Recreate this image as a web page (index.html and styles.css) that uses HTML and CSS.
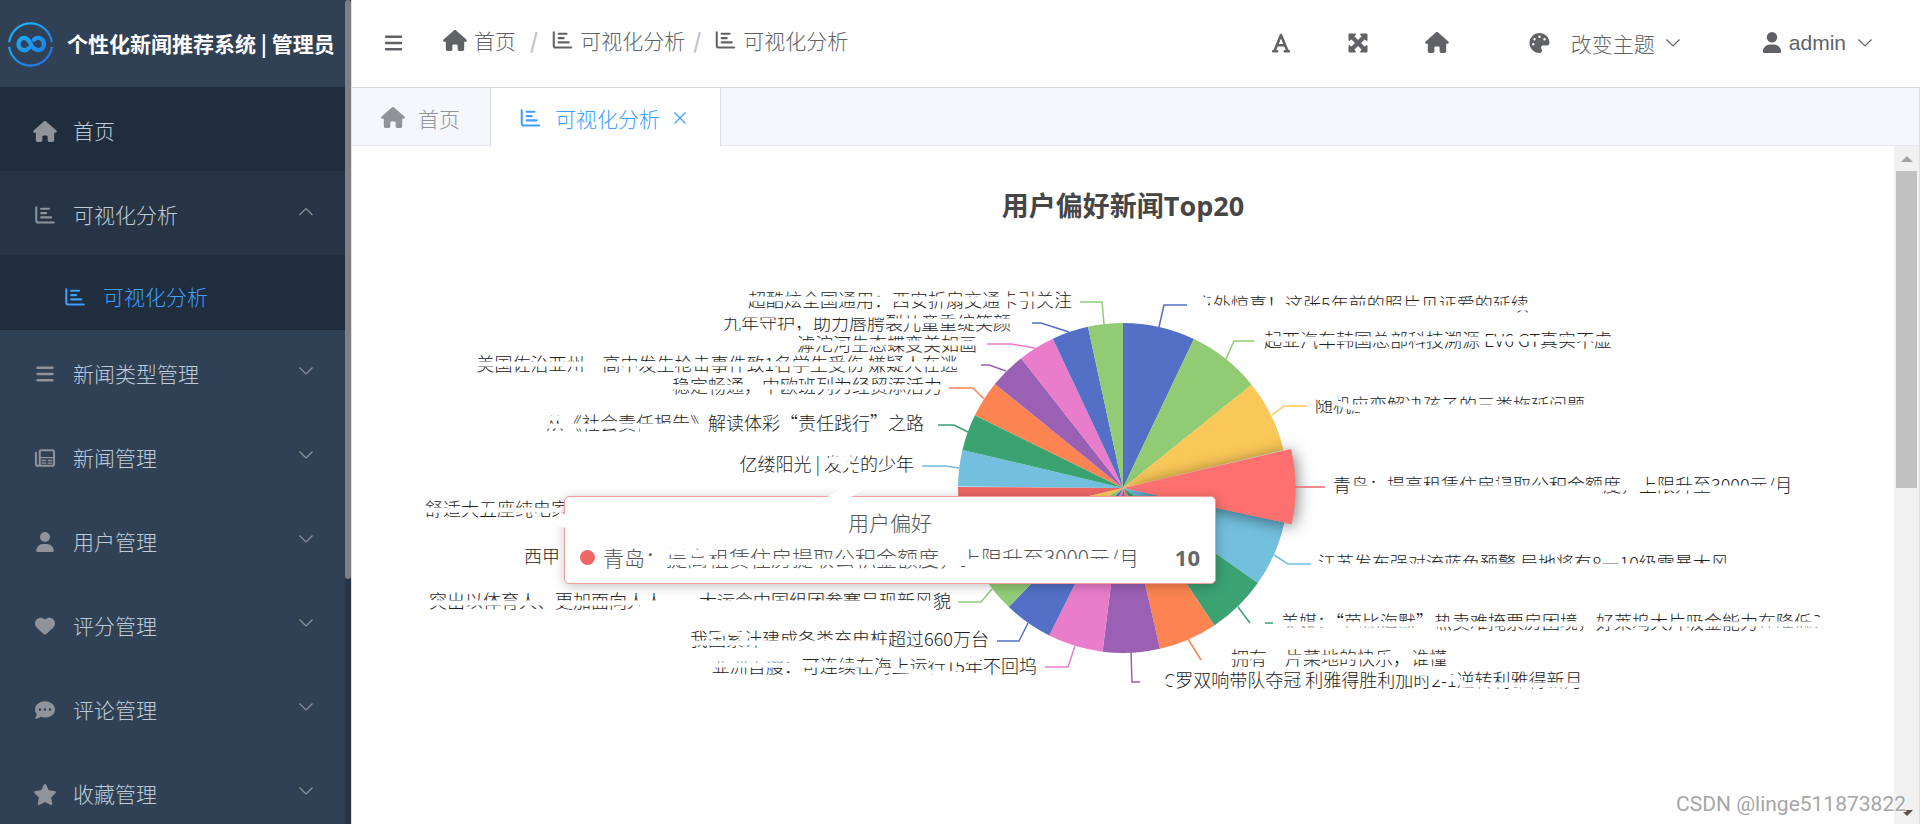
FILE: index.html
```html
<!DOCTYPE html>
<html lang="zh-CN">
<head>
<meta charset="utf-8">
<title>个性化新闻推荐系统</title>
<link rel="stylesheet" href="styles.css">
</head>
<body>
<svg class="defs" aria-hidden="true">
  <symbol id="home" viewBox="0 0 576 512"><path d="M575.8 255.5c0 18-15 32.1-32 32.1h-32l.7 160.2c0 2.7-.2 5.4-.5 8.1V472c0 22.1-17.9 40-40 40H456c-1.1 0-2.2 0-3.3-.1c-1.4 .1-2.8 .1-4.2 .1H416 392c-22.1 0-40-17.9-40-40V448 384c0-17.7-14.3-32-32-32H256c-17.7 0-32 14.3-32 32v64 24c0 22.1-17.9 40-40 40H160 128.1c-1.5 0-3-.1-4.5-.2c-1.2 .1-2.4 .2-3.6 .2H104c-22.1 0-40-17.9-40-40V360c0-.9 0-1.9 .1-2.8V287.6H32c-18 0-32-14-32-32.1c0-9 3-17 10-24L266.4 8c7-7 15-8 22-8s15 2 21 7L564.8 231.5c8 7 12 15 11 24z"/></symbol>
  <symbol id="chart" viewBox="0 0 512 512"><g fill="none" stroke="currentColor" stroke-linecap="round" stroke-linejoin="round"><path stroke-width="52" d="M32 58v330q0 60 50 60h398"/><path stroke-width="56" d="M158 96h200M158 206h128M158 316h256"/></g></symbol>
  <symbol id="bars" viewBox="0 0 448 512"><path fill="none" stroke="currentColor" stroke-width="62" stroke-linecap="round" d="M32 96h384M32 256h384M32 416h384"/></symbol>
  <symbol id="news" viewBox="0 0 512 512"><path fill="none" stroke="currentColor" stroke-width="50" stroke-linejoin="round" stroke-linecap="round" d="M122 104q0-48 48-48h270q48 0 48 48v304q0 48-48 48H72q-48 0-48-48V120M122 104v304q0 48-48 48"/><path fill="none" stroke="currentColor" stroke-width="36" d="M122 246h366M166 318h120M324 318h120M166 388h120M324 388h120"/></symbol>
  <symbol id="user" viewBox="0 0 448 512"><path d="M224 256A128 128 0 1 0 224 0a128 128 0 1 0 0 256zm-45.7 48C79.8 304 0 383.8 0 482.3C0 498.7 13.3 512 29.7 512H418.3c16.4 0 29.7-13.3 29.7-29.7C448 383.8 368.2 304 269.7 304H178.3z"/></symbol>
  <symbol id="heart" viewBox="0 0 512 512"><path d="M47.6 300.4L228.3 469.1c7.5 7 17.4 10.9 27.7 10.9s20.2-3.9 27.7-10.9L464.4 300.4c30.4-28.3 47.6-68 47.6-109.5v-5.8c0-69.9-50.5-129.5-119.4-141C347 36.5 300.6 51.4 268 84L256 96 244 84c-32.6-32.6-79-47.5-124.6-39.9C50.5 55.6 0 115.2 0 185.1v5.8c0 41.5 17.2 81.2 47.6 109.5z"/></symbol>
  <symbol id="comment" viewBox="0 0 512 512"><path d="M256 448c141.4 0 256-93.1 256-208S397.4 32 256 32S0 125.1 0 240c0 45.1 17.7 86.8 47.7 120.9c-1.9 24.5-11.4 46.3-21.4 62.9c-5.5 9.2-11.1 16.6-15.2 21.6c-2.1 2.5-3.7 4.4-4.9 5.7c-.6 .6-1 1.1-1.3 1.4l-.3 .3c-4.6 4.6-5.9 11.4-3.4 17.4c2.5 6 8.3 9.9 14.8 9.9c28.7 0 57.6-8.9 81.6-19.3c22.9-10 42.4-21.9 54.3-30.6c31.8 11.5 67 17.9 104.1 17.9zM128 208a32 32 0 1 1 0 64 32 32 0 1 1 0-64zm128 0a32 32 0 1 1 0 64 32 32 0 1 1 0-64zm96 32a32 32 0 1 1 64 0 32 32 0 1 1 -64 0z"/></symbol>
  <symbol id="star" viewBox="0 0 576 512"><path d="M316.9 18C311.6 7 300.4 0 288.1 0s-23.4 7-28.8 18L195 150.3 51.4 171.5c-12 1.8-22 10.2-25.7 21.7s-.7 24.2 7.9 32.7L137.8 329 113.2 474.7c-2 12 3 24.2 12.9 31.3s23 8 33.8 2.3l128.3-68.5 128.3 68.5c10.8 5.7 23.9 4.9 33.8-2.3s14.9-19.3 12.9-31.3L438.5 329 542.7 225.9c8.6-8.5 11.7-21.2 7.9-32.7s-13.7-19.9-25.7-21.7L381.2 150.3 316.9 18z"/></symbol>
  <symbol id="font" viewBox="0 0 20 20"><path fill="none" stroke="currentColor" stroke-width="2.6" stroke-linecap="round" stroke-linejoin="round" d="M3.6 17.800L10 2l6.400 15.800M6.200 12.200h7.600M2.200 18.200h4M13.800 18.200h4"/></symbol>
  <symbol id="expand" viewBox="0 0 20 20"><path stroke="currentColor" stroke-linejoin="round" d="M1 1h6.500L6 3.500 10 7.500l4-4L12.500 1H19v6.500L16.500 6l-4 4 4 4 2.500-1.500V19h-6.500l1.500-2.500-4-4-4 4L7.500 19H1v-6.500L3.500 14l4-4-4-4L1 7.500z"/></symbol>
  <symbol id="palette" viewBox="0 0 512 512"><path d="M512 256c0 .9 0 1.800 0 2.700c-.4 36.500-33.600 61.300-70.100 61.300H344c-26.500 0-48 21.500-48 48c0 3.400 .4 6.700 1 9.900c2.100 10.200 6.500 20 10.800 29.900c6.100 13.800 12.100 27.500 12.100 42c0 31.800-21.600 60.700-53.400 62c-3.500 .1-7 .2-10.600 .2C114.600 512 0 397.400 0 256S114.600 0 256 0S512 114.600 512 256zM128 288a32 32 0 1 0 -64 0 32 32 0 1 0 64 0zm0-96a32 32 0 1 0 0-64 32 32 0 1 0 0 64zM288 96a32 32 0 1 0 -64 0 32 32 0 1 0 64 0zm96 96a32 32 0 1 0 0-64 32 32 0 1 0 0 64z"/></symbol>
  <symbol id="down" viewBox="0 0 16 16"><path fill="none" stroke="currentColor" stroke-width="1.200" d="M1.500 4.500L8 11l6.500-6.500"/></symbol>
  <symbol id="up" viewBox="0 0 16 16"><path fill="none" stroke="currentColor" stroke-width="1.200" d="M1.500 11L8 4.500l6.500 6.500"/></symbol>
</svg>
<div class="app">
  <aside class="sidebar">
    <div class="side-main">
      <div class="brand">
        <svg class="logo" viewBox="0 0 46 46" aria-hidden="true">
          <defs><linearGradient id="lg" gradientUnits="userSpaceOnUse" x1="0" y1="0" x2="46" y2="46"><stop offset="0" stop-color="#1cc0f5"/><stop offset="1" stop-color="#1f6df0"/></linearGradient></defs>
          <g fill="none" stroke="url(#lg)"><path stroke-width="2.200" d="M1.200 21A22 22 0 0 1 44.800 21M1.200 26A22 22 0 0 0 44.800 26"/><path stroke-width="4.400" stroke-linecap="round" d="M26.500 18.500c2-1.800 4-2 5.500-1.600 6.600 2 6 10.800 0 12.200-3 .6-5.200-.8-7.600-3.800L22 20.500c-2-2.800-4-4-6-3.700-7 1.200-7 11.400 0 12.500 2.200.3 4-.6 5-1.800"/></g>
        </svg>
        <h1 class="brand-name">个性化新闻推荐系统 | 管理员</h1>
      </div>
      <nav class="menu">
        <a class="item dark" href="#"><svg class="icon home"><use href="#home"/></svg><span class="label">首页</span></a>
        <a class="item open" href="#"><svg class="icon"><use href="#chart"/></svg><span class="label">可视化分析</span><svg class="arrow"><use href="#up"/></svg></a>
        <a class="item sub dark" href="#"><svg class="icon"><use href="#chart"/></svg><span class="label">可视化分析</span></a>
        <a class="item" href="#"><svg class="icon"><use href="#bars"/></svg><span class="label">新闻类型管理</span><svg class="arrow"><use href="#down"/></svg></a>
        <a class="item" href="#"><svg class="icon"><use href="#news"/></svg><span class="label">新闻管理</span><svg class="arrow"><use href="#down"/></svg></a>
        <a class="item" href="#"><svg class="icon"><use href="#user"/></svg><span class="label">用户管理</span><svg class="arrow"><use href="#down"/></svg></a>
        <a class="item" href="#"><svg class="icon"><use href="#heart"/></svg><span class="label">评分管理</span><svg class="arrow"><use href="#down"/></svg></a>
        <a class="item" href="#"><svg class="icon"><use href="#comment"/></svg><span class="label">评论管理</span><svg class="arrow"><use href="#down"/></svg></a>
        <a class="item" href="#"><svg class="icon home"><use href="#star"/></svg><span class="label">收藏管理</span><svg class="arrow"><use href="#down"/></svg></a>
      </nav>
    </div>
    <div class="side-scroll"><div class="side-thumb"></div></div>
  </aside>
  <main class="main">
    <header class="header">
      <button class="plain toggle" aria-label="折叠菜单"><svg class="icon"><use href="#bars"/></svg></button>
      <nav class="crumbs">
        <a href="#"><svg class="icon home"><use href="#home"/></svg>首页</a><span class="slash wide">/</span>
        <a href="#"><svg class="icon"><use href="#chart"/></svg>可视化分析</a><span class="slash">/</span>
        <a href="#"><svg class="icon"><use href="#chart"/></svg>可视化分析</a>
      </nav>
      <div class="tools">
        <button class="plain" aria-label="字体"><svg class="icon small"><use href="#font"/></svg></button>
        <button class="plain" aria-label="全屏"><svg class="icon small"><use href="#expand"/></svg></button>
        <button class="plain" aria-label="主页"><svg class="icon home"><use href="#home"/></svg></button>
      </div>
      <button class="plain theme"><svg class="icon"><use href="#palette"/></svg>改变主题<svg class="arrow"><use href="#down"/></svg></button>
      <button class="plain account"><svg class="icon person"><use href="#user"/></svg>admin<svg class="arrow"><use href="#down"/></svg></button>
    </header>
    <div class="tabs">
      <a class="tab" href="#"><svg class="icon home"><use href="#home"/></svg>首页</a>
      <div class="tab active"><svg class="icon"><use href="#chart"/></svg>可视化分析<button class="plain close" aria-label="关闭"><svg viewBox="0 0 14 14"><path d="M1.500 1.500l11 11M12.500 1.500l-11 11"/></svg></button></div>
    </div>
    <div class="content">
      <section class="panel">
        <h2 class="chart-title">用户偏好新闻Top20</h2>
        <div class="chart">
          <svg class="pie" viewBox="352 246 1542 578" role="img" aria-label="用户偏好新闻Top20">
            <g class="slices" transform="rotate(-90 1123 488)">
              <circle cx="1123" cy="488" r="82.500" pathLength="360" stroke="#5470c6" stroke-dasharray="25.500 360"/>
              <circle cx="1123" cy="488" r="82.500" pathLength="360" stroke="#91cc75" stroke-dasharray="25.700 360" stroke-dashoffset="-25.500"/>
              <circle cx="1123" cy="488" r="82.500" pathLength="360" stroke="#fac858" stroke-dasharray="25.400 360" stroke-dashoffset="-51.200"/>
              <circle cx="1123" cy="488" r="82.500" pathLength="360" stroke="#73c0de" stroke-dasharray="23.100 360" stroke-dashoffset="-102.100"/>
              <circle cx="1123" cy="488" r="82.500" pathLength="360" stroke="#3ba272" stroke-dasharray="21.200 360" stroke-dashoffset="-125.200"/>
              <circle cx="1123" cy="488" r="82.500" pathLength="360" stroke="#fc8452" stroke-dasharray="20.600 360" stroke-dashoffset="-146.400"/>
              <circle cx="1123" cy="488" r="82.500" pathLength="360" stroke="#9a60b4" stroke-dasharray="20.200 360" stroke-dashoffset="-167"/>
              <circle cx="1123" cy="488" r="82.500" pathLength="360" stroke="#ea7ccc" stroke-dasharray="19.400 360" stroke-dashoffset="-187.200"/>
              <circle cx="1123" cy="488" r="82.500" pathLength="360" stroke="#5470c6" stroke-dasharray="17.200 360" stroke-dashoffset="-206.600"/>
              <circle cx="1123" cy="488" r="82.500" pathLength="360" stroke="#91cc75" stroke-dasharray="17 360" stroke-dashoffset="-223.800"/>
              <circle cx="1123" cy="488" r="82.500" pathLength="360" stroke="#fac858" stroke-dasharray="15.900 360" stroke-dashoffset="-240.800"/>
              <circle cx="1123" cy="488" r="82.500" pathLength="360" stroke="#ee6666" stroke-dasharray="13.800 360" stroke-dashoffset="-256.700"/>
              <circle cx="1123" cy="488" r="82.500" pathLength="360" stroke="#73c0de" stroke-dasharray="12.900 360" stroke-dashoffset="-270.500"/>
              <circle cx="1123" cy="488" r="82.500" pathLength="360" stroke="#3ba272" stroke-dasharray="12.800 360" stroke-dashoffset="-283.400"/>
              <circle cx="1123" cy="488" r="82.500" pathLength="360" stroke="#fc8452" stroke-dasharray="12.900 360" stroke-dashoffset="-296.200"/>
              <circle cx="1123" cy="488" r="82.500" pathLength="360" stroke="#9a60b4" stroke-dasharray="12.800 360" stroke-dashoffset="-309.100"/>
              <circle cx="1123" cy="488" r="82.500" pathLength="360" stroke="#ea7ccc" stroke-dasharray="12.900 360" stroke-dashoffset="-321.900"/>
              <circle cx="1123" cy="488" r="82.500" pathLength="360" stroke="#5470c6" stroke-dasharray="12.900 360" stroke-dashoffset="-334.800"/>
              <circle cx="1123" cy="488" r="82.500" pathLength="360" stroke="#91cc75" stroke-dasharray="12.300 360" stroke-dashoffset="-347.700"/>
            </g>
            <g class="hovered"><path d="M1123 488L1291 449A172.500 172.500 0 0 1 1291.700 524.200z"/></g>
            <g class="lines">
              <path stroke="#5470c6" d="M1159 327l5-22h23"/><path stroke="#91cc75" d="M1226 359l8-18h20"/>
              <path stroke="#fac858" d="M1272 415l12-9h23"/><path stroke="#ee6666" d="M1295 487h30"/>
              <path stroke="#73c0de" d="M1274 555l14 9h23"/><path stroke="#3ba272" d="M1238 607l12 16M1265 623h8"/>
              <path stroke="#fc8452" d="M1188 639l13 21"/><path stroke="#9a60b4" d="M1131 652l1 30h8"/>
              <path stroke="#ea7ccc" d="M1075 646l-7 21h-23"/><path stroke="#5470c6" d="M1028 623l-9 18h-22"/>
              <path stroke="#91cc75" d="M992 589l-11 13h-23"/><path stroke="#73c0de" d="M959 468l-14-2h-23"/>
              <path stroke="#3ba272" d="M968 432l-14-7h-16"/><path stroke="#fc8452" d="M984 399l-11-11h-24"/>
              <path stroke="#9a60b4" d="M1006 371l-17-6h-8"/><path stroke="#ea7ccc" d="M1035 348l-24-4h-24"/>
              <path stroke="#5470c6" d="M1069 332l-28-9h-9"/><path stroke="#91cc75" d="M1104 324l-2-22h-22"/>
            </g>
            <g class="names">
              <text x="1195" y="311">意外惊喜！这张5年前的照片见证爱的延续</text>
              <text x="1264" y="347">起亚汽车韩国总部科技溯源 EV6 GT真实不虚</text>
              <text x="1315" y="412">随机应变解决孩子的三类拖延问题</text>
              <text x="1333" y="492">青岛：提高租赁住房提取公积金额度，上限升至3000元/月</text>
              <text x="1318" y="570">江苏发布强对流蓝色预警 局地将有8—10级雷暴大风</text>
              <text x="1281" y="629">美媒：“芭比海默”热卖难掩票房困境，好莱坞大片吸金能力在降低？</text>
              <text x="1231" y="665">拥有一片菜地的快乐，谁懂</text>
              <text x="1164" y="687">C罗双响带队夺冠 利雅得胜利加时2-1逆转利雅得新月</text>
              <text x="524" y="563">西甲·</text>
            </g>
            <g class="names left">
              <text x="1072" y="307">超酷炫全国通用：西安折扇交通卡引关注</text>
              <text x="1011" y="330">九年守护，助力唇腭裂儿童重绽笑颜</text>
              <text x="977" y="351">滹沱河生态蝶变美如画</text>
              <text x="958" y="371">美国佐治亚州一高中发生枪击事件致1名学生受伤 嫌疑人在逃</text>
              <text x="942" y="393">稳定畅通，中欧班列为经贸添活力</text>
              <text x="924" y="430">从《社会责任报告》解读体彩“责任践行”之路</text>
              <text x="914" y="471">亿缕阳光 | 发光的少年</text>
              <text x="569" y="516">舒适大五座纯电家</text>
              <text x="951" y="608">突出以体育人、更加面向人人——大运会中国组团参赛呈现新风貌</text>
              <text x="989" y="646">我国累计建成各类充电桩超过660万台</text>
              <text x="1037" y="673">亚洲首艘：可连续在海上运行15年不回坞</text>
            </g>
            <g class="wipe">
              <path d="M1194 308h336M1194 313h320M1194 298l20 3M1194 304h14"/><path d="M1262 339h360"/>
              <path d="M1313 397l25 2M1334 402l26 8M1350 407h240M1360 412h225"/>
              <path d="M1352 488h426M1352 493h250M1712 493h66M1501 479v12"/>
              <path d="M1316 566h424M1316 571h424"/><path d="M1279 624h560M1279 630h158M1760 630h76M1806 617l30 6"/>
              <path d="M1229 657h222"/><path d="M1162 680l16 6M1385 672l60 2 20 10M1460 685h126M1430 676l30 4"/>
              <path d="M746 299h310"/><path d="M720 315h164M884 321h130M720 333h100"/>
              <path d="M798 343h180"/><path d="M473 364h486"/><path d="M670 387h274"/>
              <path d="M543 418h30M543 426h155M640 431h60M770 436h160"/><path d="M820 459l20 3 20 8M830 459h22"/>
              <path d="M423 510h142"/>
              <path d="M423 603h510M640 608h294"/><path d="M708 637l20-5 22 4M690 643h190M760 648h110M860 643l30 6"/>
              <path d="M709 659h90M709 665h170M880 670l50 2 50 4M930 660h50"/>
            </g>
          </svg>
          <div class="tooltip">
            <div class="tip-title">用户偏好</div>
            <div class="tip-row"><i class="dot"></i><span class="tip-name">青岛：提高租赁住房提取公积金额度，上限升至3000元/月</span><b class="tip-value">10</b></div>
            <svg class="tip-wipe" viewBox="0 0 652 88" aria-hidden="true"><path d="M80 65h478M96 54l40 2 16-1M84 71h18M400 71h166"/><path class="thick" d="M264 6l34-20M2 26L-8 20"/></svg>
          </div>
        </div>
      </section>
      <div class="scrollbar"><i class="tri up"></i><div class="thumb"></div><i class="tri down"></i></div>
      <div class="watermark">CSDN @linge511873822</div>
    </div>
  </main>
</div>
</body>
</html>
```
FILE: styles.css
```css
* { box-sizing: border-box; }
body {
  margin: 0;
  height: 100vh;
  overflow: hidden;
  font-family: "Noto Sans CJK SC", sans-serif;
  font-weight: 300;
  font-size: 21px;
  line-height: 28px;
  color: #606266;
}
a { color: inherit; text-decoration: none; }
svg { display: block; flex: none; }
.defs { position: absolute; width: 0; height: 0; }
.icon { width: 21px; height: 20px; fill: currentColor; }
.icon.home { width: 24px; height: 21px; }
.icon.small { width: 20px; height: 20px; }
.icon.person { width: 20px; height: 21px; }
.arrow { width: 16px; height: 16px; }
.plain {
  display: flex;
  align-items: center;
  padding: 0;
  border: 0;
  background: none;
  color: inherit;
  font: inherit;
}
.app { display: flex; height: 100%; }

.sidebar { display: flex; flex: none; width: 351px; background: #304156; overflow: hidden; }
.side-main { flex: 1; }
.side-scroll { width: 6px; background: #263445; }
.side-thumb { height: 579px; border-radius: 3px; background: #7f7f7f; }
.brand { display: flex; align-items: center; height: 87px; padding-left: 8px; gap: 14px; }
.logo { width: 45px; height: 46px; }
.brand-name { margin: 0; padding-bottom: 2px; font-size: 21px; font-weight: 700; color: #fff; white-space: nowrap; }
.item {
  display: flex;
  align-items: center;
  height: 84px;
  padding: 4px 31px 0 33px;
  color: #bfcbd9;
}
.item .icon { width: 24px; color: #909399; }
.item .label { flex: 1; margin-left: 16px; padding-bottom: 2px; }
.item .arrow { color: #909399; margin-bottom: 6px; }
.item.dark { background: #1f2d3d; }
.item.open { background: #263445; }
.item.sub { height: 75px; padding-left: 63px; padding-top: 8px; color: #409eff; }
.item.sub .icon { color: #409eff; }

.main { display: flex; flex-direction: column; flex: 1; min-width: 0; border-left: 1px solid #dcdfe6; }
.header {
  display: flex;
  align-items: center;
  flex: none;
  height: 88px;
  padding: 0 47px 2px 31px;
  border-bottom: 1px solid #d2d5da;
}
.crumbs { display: flex; align-items: center; margin-left: 39px; padding-bottom: 5px; }
.crumbs a { display: flex; align-items: center; gap: 7px; }
.slash { margin: 0 14px 0 8px; font-weight: 700; color: #c0c4cc; }
.slash.wide { margin: 0 14px; }
.tools { display: flex; align-items: center; gap: 57px; margin-left: auto; }
.theme { margin-left: 80px; }
.theme .arrow { margin-left: 10px; }
.theme .icon { margin-right: 21px; }
.account { margin-left: 81px; gap: 7px; font-family: "Liberation Sans", sans-serif; font-size: 21px; font-weight: 400; }
.account .arrow { margin-left: 4px; }

.tabs { display: flex; flex: none; height: 58px; background: #f5f7fa; border-bottom: 1px solid #e4e7ed; border-right: 1px solid #dcdfe6; }
.tab { display: flex; align-items: center; padding: 2px 30px 0 29px; gap: 13px; color: #909399; }
.tab.active { height: 58px; padding-right: 33px; background: #fff; color: #409eff; border: solid #dcdfe6; border-width: 0 1px; }
.tab.active .icon { margin-right: 1px; }
.close svg { width: 14px; height: 14px; fill: none; stroke: #409eff; stroke-width: 1.3; }

.content { display: flex; flex: 1; min-height: 0; position: relative; border-right: 1px solid #dcdfe6; }
.panel { flex: 1; min-width: 0; overflow: hidden; }
.chart-title {
  margin: 0;
  padding-top: 40px;
  height: 100px;
  line-height: 40px;
  font-family: "Open Sans", "Noto Sans CJK SC", sans-serif;
  font-size: 27px;
  font-weight: 700;
  text-align: center;
  color: #464646;
}
.chart { position: relative; }
.pie { width: 100%; }
.slices circle { fill: none; stroke-width: 165px; }
.hovered path { fill: #ff7070; }
.hovered { filter: drop-shadow(2px 2px 8px rgba(0, 0, 0, 0.5)); }
.lines path { fill: none; stroke-width: 1.5px; }
.names { font-size: 18px; fill: #222; }
.names.left { text-anchor: end; }
.wipe path { fill: none; stroke: #fff; stroke-width: 5px; }

.tooltip {
  position: absolute;
  left: 212px;
  top: 250px;
  width: 652px;
  height: 88px;
  padding: 11px 15px 0;
  border: 1px solid #f29b9b;
  border-radius: 5px;
  background: #fff;
  box-shadow: 1px 2px 12px rgba(0, 0, 0, 0.25);
  color: #555;
}
.tip-title { text-align: center; }
.tip-row { display: flex; align-items: center; padding-top: 7px; white-space: nowrap; }
.dot { width: 15px; height: 15px; margin-right: 8px; border-radius: 50%; background: #ee6666; }
.tip-value { margin-left: auto; font-family: "Open Sans", sans-serif; font-size: 22px; font-weight: 700; color: #666; }
.tip-wipe { position: absolute; left: 0; top: 0; width: 652px; height: 88px; overflow: visible; fill: none; stroke: #fff; stroke-width: 6px; }
.tip-wipe .thick { stroke-width: 12px; }

.scrollbar { display: flex; flex-direction: column; align-items: center; width: 25px; padding: 10px 0 8px; background: #f1f1f1; }
.thumb { width: 21px; height: 317px; margin: 9px 0 auto; background: #c1c1c1; }
.tri { border: solid transparent; border-width: 0 6px; }
.tri.up { border-bottom: 6px solid #a3a3a3; }
.tri.down { border-top: 6px solid #505050; }
.watermark {
  position: absolute;
  right: 13px;
  bottom: 6px;
  font-family: Roboto, sans-serif;
  font-weight: 400;
  font-size: 21px;
  color: #a6a6a6;
  text-shadow: 1px 1px 0 #fff;
}
```
